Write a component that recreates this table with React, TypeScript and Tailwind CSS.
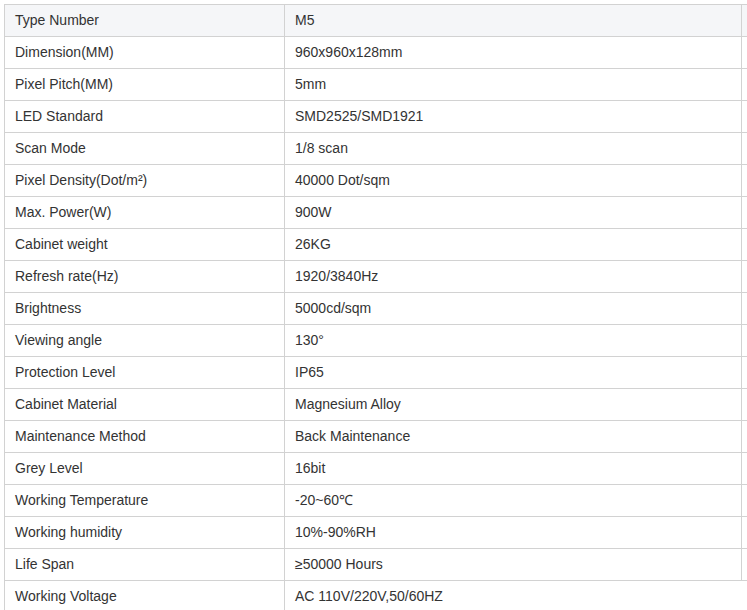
const rows: [string, React.ReactNode][] = [
  ['Type Number', 'M5'],
  ['Dimension(MM)', '960x960x128mm'],
  ['Pixel Pitch(MM)', '5mm'],
  ['LED Standard', 'SMD2525/SMD1921'],
  ['Scan Mode', '1/8 scan'],
  [
    'Pixel Density(Dot/m²)',
    '40000 Dot/sqm',
  ],
  ['Max. Power(W)', '900W'],
  ['Cabinet weight', '26KG'],
  ['Refresh rate(Hz)', '1920/3840Hz'],
  ['Brightness', '5000cd/sqm'],
  ['Viewing angle', '130°'],
  ['Protection Level', 'IP65'],
  ['Cabinet Material', 'Magnesium Alloy'],
  ['Maintenance Method', 'Back Maintenance'],
  ['Grey Level', '16bit'],
  ['Working Temperature', '-20~60℃'],
  ['Working humidity', '10%-90%RH'],
  ['Life Span', '≥50000 Hours'],
  ['Working Voltage', 'AC 110V/220V,50/60HZ'],
];

export default function App() {
  return (
    <div className="h-[610px] w-[747px] overflow-hidden bg-white pl-[4px] pt-[4px] font-['Liberation_Sans',Arial,sans-serif] text-[14px] text-[#333]">
      <div className="border-t border-[#d2d2d2]">
        {rows.map(([name, value], i) => {
          const last = i === rows.length - 1;
          return (
            <div
              key={i}
              className={`flex h-[32px] border-b border-[#d2d2d2] ${i === 0 ? 'bg-[#f5f6f8]' : 'bg-white'}`}
            >
              <div className="flex w-[281px] shrink-0 items-center border-x border-[#d2d2d2] pl-[10px]">
                {name}
              </div>
              <div
                className={`flex w-[457px] shrink-0 items-center pl-[10px] ${last ? '' : 'border-r border-[#d2d2d2]'}`}
              >
                {value}
              </div>
              <div className="flex-1" />
            </div>
          );
        })}
      </div>
    </div>
  );
}
